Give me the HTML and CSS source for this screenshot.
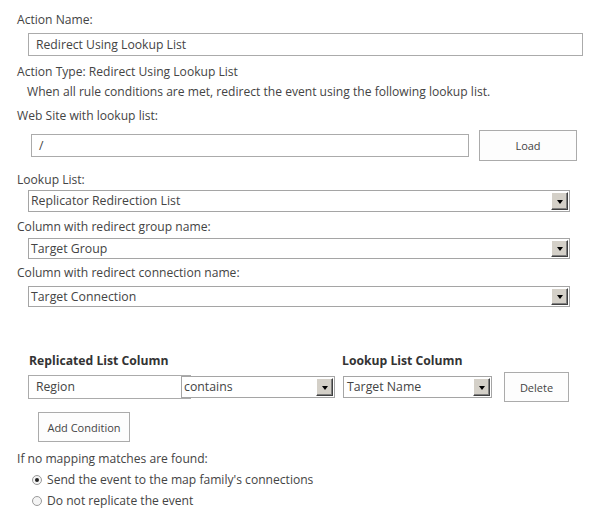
FILE: index.html
```html
<!DOCTYPE html>
<html>
<head>
<meta charset="utf-8">
<link rel="stylesheet" href="styles.css">
</head>
<body>
<div class="page">
  <div class="label first">Action Name:</div>
  <div class="input name-input">Redirect Using Lookup List</div>
  <div class="label type">Action Type: Redirect Using Lookup List</div>
  <div class="label desc">When all rule conditions are met, redirect the event using the following lookup list.</div>
  <div class="label web">Web Site with lookup list:</div>
  <div class="web-row">
    <div class="input web-input">/</div>
    <div class="btn load-btn">Load</div>
  </div>
  <div class="label lookup">Lookup List:</div>
  <div class="select sel1"><span class="sel-text">Replicator Redirection List</span><span class="arrow"></span></div>
  <div class="label l2">Column with redirect group name:</div>
  <div class="select sel2"><span class="sel-text">Target Group</span><span class="arrow"></span></div>
  <div class="label l3">Column with redirect connection name:</div>
  <div class="select sel3"><span class="sel-text">Target Connection</span><span class="arrow"></span></div>

  <div class="headers">
    <div class="hdr hdr1">Replicated List Column</div>
    <div class="hdr">Lookup List Column</div>
  </div>
  <div class="cond-row">
    <div class="input region">Region</div>
    <div class="select op"><span class="sel-text">contains</span><span class="arrow"></span></div>
    <div class="select target"><span class="sel-text">Target Name</span><span class="arrow"></span></div>
    <div class="btn del-btn">Delete</div>
  </div>
  <div class="btn add-btn">Add Condition</div>
  <div class="label nomatch">If no mapping matches are found:</div>
  <div class="radio-row r1"><span class="radio checked"></span><span>Send the event to the map family's connections</span></div>
  <div class="radio-row r2"><span class="radio"></span><span>Do not replicate the event</span></div>
</div>
</body>
</html>
```

FILE: styles.css
```css
html, body {
  margin: 0;
  padding: 0;
  background: #fff;
}
body {
  font-family: "Open Sans", "Noto Sans", sans-serif;
  font-size: 12.1px;
  color: #444;
}
.page {
  padding: 11px 0 0 17px;
}
.label {
  line-height: 18px;
  white-space: nowrap;
}
.input {
  box-sizing: border-box;
  border: 1px solid #ababab;
  background: #fff;
  height: 23px;
  line-height: 21px;
  padding-left: 7px;
  white-space: nowrap;
  font-size: 12.2px;
}
.name-input {
  margin: 4px 0 0 11px;
  width: 555px;
}
.type { margin-top: 7px; }
.desc { margin-top: 2px; padding-left: 10px; }
.web { margin-top: 6px; }
.web-row {
  margin-top: 5px;
  display: flex;
  align-items: center;
}
.web-input {
  margin-left: 14px;
  width: 438px;
}
.btn {
  box-sizing: border-box;
  border: 1px solid #ababab;
  background: #fdfdfd;
  font-size: 11px;
  color: #444;
  display: flex;
  align-items: center;
  justify-content: center;
  height: 31px;
}
.load-btn {
  margin-left: 10px;
  width: 98px;
}
.lookup { margin-top: 10px; }
.select {
  box-sizing: border-box;
  border: 1px solid #a5a5a5;
  background: #fff;
  display: flex;
  align-items: stretch;
  height: 21px;
  position: relative;
  font-size: 12.3px;
}
.sel-text {
  flex: 1;
  padding-left: 2px;
  line-height: 19px;
  white-space: nowrap;
  overflow: hidden;
}
.arrow {
  box-sizing: border-box;
  width: 17px;
  margin: 1px 1px 1px 0;
  background: #d4d0c8;
  border-top: 1px solid #fff;
  border-left: 1px solid #fff;
  border-right: 1px solid #404040;
  border-bottom: 1px solid #404040;
  box-shadow: inset -1px -1px 0 #808080;
  display: flex;
  align-items: center;
  justify-content: center;
}
.arrow::after {
  content: "";
  width: 0;
  height: 0;
  border-left: 3.5px solid transparent;
  border-right: 3.5px solid transparent;
  border-top: 4px solid #000;
  margin-top: 1px;
}
.sel1 { margin: 1px 0 0 11px; width: 542px; height: 22px; }
.l2 { margin-top: 6px; }
.sel2 { margin: 2px 0 0 11px; width: 542px; }
.l3 { margin-top: 5px; }
.sel3 { margin: 4px 0 0 11px; width: 542px; }

.headers {
  margin-top: 45px;
  display: flex;
  line-height: 18px;
}
.hdr {
  font-weight: 700;
  color: #333;
  font-size: 12.2px;
}
.hdr1 {
  margin-left: 12px;
  width: 313px;
}
.cond-row {
  margin-top: 2px;
  display: flex;
  align-items: center;
  height: 30px;
}
.region {
  margin-left: 11px;
  width: 163px;
  height: 24px;
  line-height: 22px;
}
.op {
  margin-left: -10px;
  width: 154px;
  height: 22px;
}
.op .sel-text, .target .sel-text { line-height: 20px; }
.target {
  margin-left: 8px;
  width: 149px;
  height: 22px;
}
.target .sel-text { padding-left: 3px; }
.del-btn {
  margin-left: 12px;
  width: 65px;
  height: 30px;
}
.add-btn {
  margin: 10px 0 0 21px;
  width: 92px;
  height: 30px;
}
.nomatch { margin-top: 8px; }
.radio-row {
  display: flex;
  align-items: center;
  line-height: 18px;
  padding-left: 15px;
  margin-top: 3px;
}
.radio {
  box-sizing: border-box;
  width: 10px;
  height: 10px;
  border-radius: 50%;
  border: 1px solid #9a9a9a;
  background: #f4f4f4;
  margin-right: 5px;
  display: flex;
  align-items: center;
  justify-content: center;
}
.radio.checked::after {
  content: "";
  width: 4px;
  height: 4px;
  border-radius: 50%;
  background: #222;
}
```
